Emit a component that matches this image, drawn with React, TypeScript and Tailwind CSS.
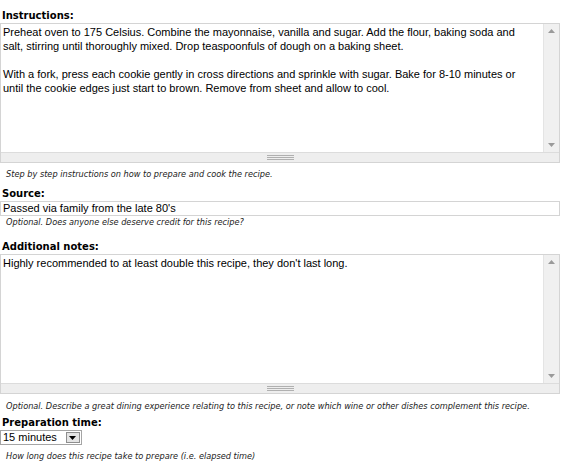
import React from 'react';

const bodyFont = "font-['Liberation_Sans',Arial,sans-serif]";
const labelFont = "font-['DejaVu_Sans',Verdana,sans-serif]";

function Label({ children }: { children: React.ReactNode }) {
  return (
    <div className={`${labelFont} text-[10px] leading-[15px] font-bold text-black pl-[2px]`}>
      {children}
    </div>
  );
}

function Hint({ children }: { children: React.ReactNode }) {
  return (
    <div className={`${labelFont} text-[8.2px] leading-[12px] italic text-[#222] pl-[6px]`}>
      {children}
    </div>
  );
}

// Fake textarea with the old-style scrollbar and resize grip
function TextBox({ paragraphs }: { paragraphs: string[] }) {
  return (
    <div className="w-[560px] h-[140px] border border-[#d4d4d4] flex flex-col bg-white">
      <div className="flex flex-1 min-h-0">
        <div className={`${bodyFont} flex-1 text-[11px] leading-[14px] text-black pt-[1px] pl-[2px] pr-2 space-y-[14px]`}>
          {paragraphs.map((p, i) => (
            <p key={i}>{p}</p>
          ))}
        </div>
        <div className="w-[16px] bg-[#f0f0f0] border-l border-[#e4e4e4] flex flex-col justify-between items-center py-[5px]">
          <svg width="7" height="4" viewBox="0 0 7 4">
            <path d="M0 4 L3.5 0 L7 4 Z" fill="#9a9a9a" />
          </svg>
          <svg width="7" height="4" viewBox="0 0 7 4">
            <path d="M0 0 L3.5 4 L7 0 Z" fill="#9a9a9a" />
          </svg>
        </div>
      </div>
      <div className="h-[10px] bg-[#eeeeee] border-t border-[#dcdcdc] flex items-center justify-center">
        <div className="w-[27px] flex flex-col gap-[1px]">
          <div className="h-px bg-[#b0b0b0]" />
          <div className="h-px bg-[#b0b0b0]" />
          <div className="h-px bg-[#b0b0b0]" />
        </div>
      </div>
    </div>
  );
}

export default function App() {
  return (
    <div className="w-[585px] h-[464px] bg-white overflow-hidden">
      <div className="pt-[8px]">
        <Label>Instructions:</Label>
      </div>
      <TextBox
        paragraphs={[
          'Preheat oven to 175 Celsius. Combine the mayonnaise, vanilla and sugar. Add the flour, baking soda and salt, stirring until thoroughly mixed. Drop teaspoonfuls of dough on a baking sheet.',
          'With a fork, press each cookie gently in cross directions and sprinkle with sugar. Bake for 8-10 minutes or until the cookie edges just start to brown. Remove from sheet and allow to cool.',
        ]}
      />
      <div className="mt-[5px]">
        <Hint>Step by step instructions on how to prepare and cook the recipe.</Hint>
      </div>

      <div className="mt-[6px]">
        <Label>Source:</Label>
      </div>
      <div
        className={`${bodyFont} w-[560px] h-[15px] border border-[#d4d4d4] text-[11px] leading-[13px] text-black pl-[2px]`}
      >
        Passed via family from the late 80's
      </div>
      <div>
        <Hint>Optional. Does anyone else deserve credit for this recipe?</Hint>
      </div>

      <div className="mt-[11px]">
        <Label>Additional notes:</Label>
      </div>
      <TextBox paragraphs={["Highly recommended to at least double this recipe, they don't last long."]} />
      <div className="mt-[6px]">
        <Hint>
          Optional. Describe a great dining experience relating to this recipe, or note which wine or other dishes
          complement this recipe.
        </Hint>
      </div>

      <div className="mt-[3px]">
        <Label>Preparation time:</Label>
      </div>
      <div className="flex">
        <div className="flex items-center h-[15px] border border-[#a5a5a5] pl-[2px] pr-[1px]">
          <span className={`${bodyFont} text-[11px] leading-[13px] text-black pr-[9px]`}>15 minutes</span>
          <div className="w-[14px] h-[11px] bg-[#e4e4e4] border border-[#8e8e8e] flex items-center justify-center">
            <svg width="7" height="4" viewBox="0 0 7 4">
              <path d="M0 0 L3.5 4 L7 0 Z" fill="#000" />
            </svg>
          </div>
        </div>
      </div>
      <div className="mt-[5px]">
        <Hint>How long does this recipe take to prepare (i.e. elapsed time)</Hint>
      </div>
    </div>
  );
}
